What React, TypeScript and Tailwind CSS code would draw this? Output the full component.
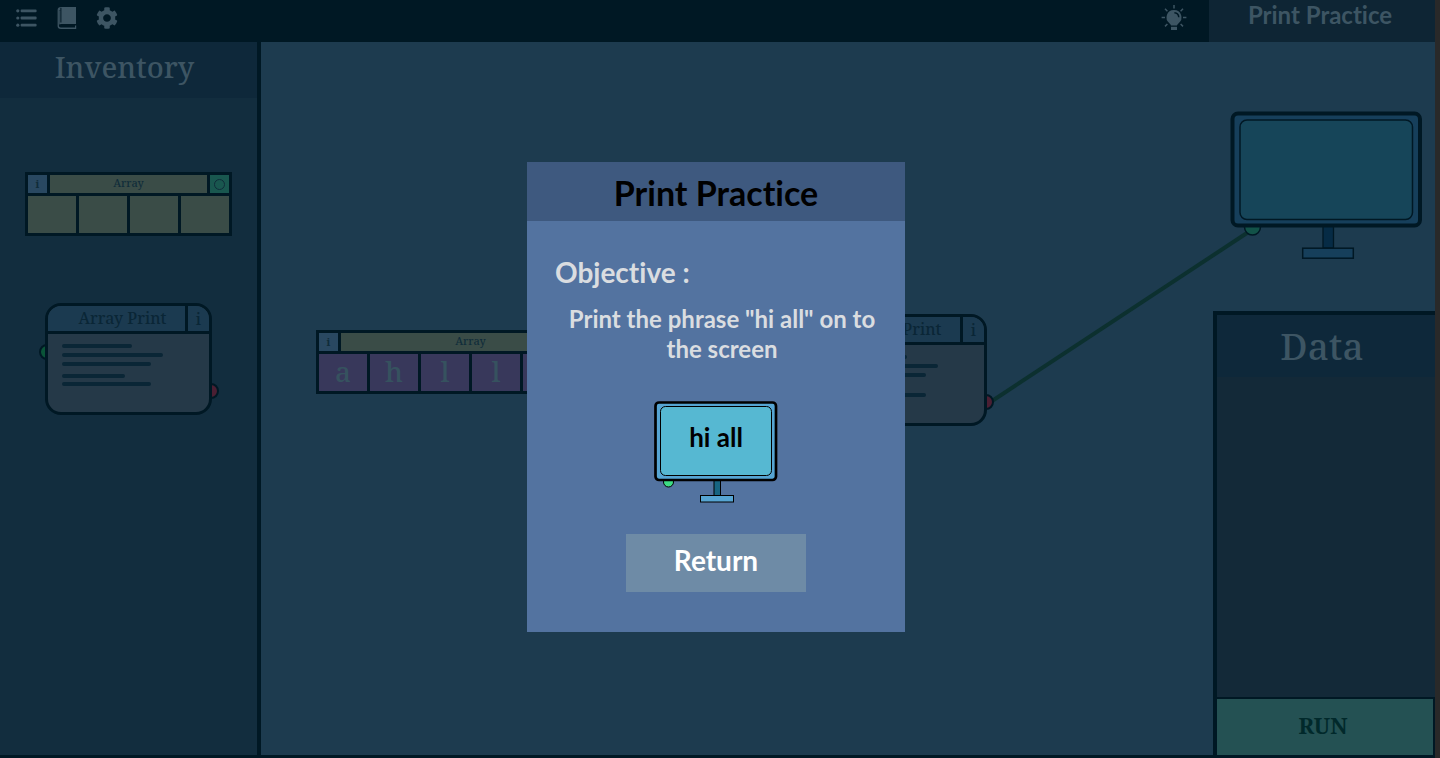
import React from "react";

const serif = "font-['Noto_Serif','DejaVu_Serif_Condensed','DejaVu_Serif',serif]";
const hand = "font-['Lato',sans-serif] [font-variant-ligatures:none]";

function ListIcon() {
  return (
    <svg viewBox="0 0 22 18" className="h-[18px] w-[22px]" fill="currentColor" aria-hidden="true">
      <circle cx="1.800" cy="1.800" r="1.600" />
      <circle cx="1.800" cy="9" r="1.600" />
      <circle cx="1.800" cy="16.200" r="1.600" />
      <rect x="4.600" y="0.400" width="16" height="2.800" rx="1" />
      <rect x="4.600" y="7.600" width="16" height="2.800" rx="1" />
      <rect x="4.600" y="14.800" width="16" height="2.800" rx="1" />
    </svg>
  );
}

function BookIcon() {
  return (
    <svg viewBox="0 0 20 22" className="h-[22px] w-5" fill="currentColor" aria-hidden="true">
      <path d="M4 0H19V17H4.200C3.400 17 2.600 17.200 2.200 17.600V3.200H3.400V15.600H4.400V0.800H3.400V3H1.900V18.600C1.900 20 2.600 20.400 3.800 20.400H18V18.400H19.200V22H4C1.600 22 0.600 21 0.600 19V3C0.600 1 1.800 0 4 0Z" />
    </svg>
  );
}

function GearIcon() {
  return (
    <svg viewBox="0 0 512 512" className="h-[22px] w-[22px]" fill="currentColor" aria-hidden="true">
      <path d="M487.400 315.700l-42.600-24.600c4.300-23.200 4.300-47 0-70.200l42.600-24.600c4.900-2.800 7.100-8.600 5.500-14-11.100-35.600-30-67.800-54.700-94.600-3.800-4.100-10-5.100-14.800-2.300L380.800 110c-17.900-15.400-38.500-27.300-60.800-35.100V25.800c0-5.600-3.900-10.500-9.400-11.700-36.700-8.200-74.300-7.800-109.200 0-5.500 1.200-9.400 6.100-9.400 11.700V75c-22.200 7.900-42.800 19.800-60.800 35.100L88.700 85.500c-4.900-2.800-11-1.900-14.800 2.300-24.700 26.700-43.600 58.900-54.700 94.600-1.700 5.400.6 11.200 5.500 14L67.300 221c-4.300 23.200-4.300 47 0 70.200l-42.600 24.600c-4.900 2.800-7.100 8.600-5.500 14 11.100 35.600 30 67.800 54.700 94.600 3.800 4.100 10 5.100 14.800 2.300l42.600-24.600c17.900 15.400 38.500 27.300 60.800 35.100v49.200c0 5.600 3.900 10.500 9.400 11.700 36.700 8.200 74.300 7.800 109.200 0 5.500-1.200 9.400-6.100 9.400-11.700v-49.200c22.200-7.900 42.800-19.800 60.800-35.100l42.600 24.600c4.900 2.800 11 1.900 14.800-2.300 24.700-26.700 43.600-58.900 54.700-94.600 1.500-5.500-.7-11.300-5.600-14.100zM256 346c-49.600 0-90-40.400-90-90s40.400-90 90-90 90 40.400 90 90-40.400 90-90 90z" />
    </svg>
  );
}

function BulbIcon() {
  return (
    <svg viewBox="0 0 26 26" className="h-[26px] w-[26px]" aria-hidden="true">
      <g fill="currentColor">
        <path d="M13 5a7.400 7.400 0 0 0-4.400 13.400c.8.600 1.200 1.200 1.400 2.200h6c.2-1 .6-1.600 1.400-2.200A7.400 7.400 0 0 0 13 5z" />
        <rect x="10" y="21.800" width="6" height="3.200" />
      </g>
      <path d="M13.400 7.800a4.800 4.800 0 0 1 4.400 4.400" fill="none" stroke="#001824" strokeWidth="1.500" />
      <path
        d="M13 0v3.400M0.600 12.600H4M22 12.600h3.400M4 3.800l2.400 2.400M22 3.800l-2.400 2.400M4 21.400l2.400-2.400M22 21.400l-2.400-2.400"
        fill="none"
        stroke="currentColor"
        strokeWidth="1.500"
      />
    </svg>
  );
}

type ArrayBlockProps = { cells: string[]; filled?: boolean };

function ArrayBlock({ cells, filled }: ArrayBlockProps) {
  return (
    <div className={`inline-flex flex-col gap-[3px] bg-[#001824] p-[3px] font-medium text-[#102c3a] ${serif}`}>
      <div className="flex h-[18px] gap-[3px] text-[11px] leading-[16px]">
        <button type="button" aria-label="Array info" className="w-[19px] bg-[#294861] font-bold">
          i
        </button>
        <div className="flex-1 bg-[#3a4c47] text-center">Array</div>
        <div className="flex w-[19px] items-center justify-center bg-[#19574f]">
          <span className="size-[11px] rounded-full border border-[#102c3a]" />
        </div>
      </div>
      <div className="flex gap-[3px]">
        {cells.map((c, i) => (
          <div
            key={i}
            className={`h-[37px] w-12 text-center text-[28px] leading-[34px] text-[#36525f] ${
              filled ? "bg-[#38385b]" : "bg-[#3a4c47]"
            }`}
          >
            {c}
          </div>
        ))}
      </div>
    </div>
  );
}

function PrintBlock() {
  return (
    <div className="relative w-[167px]">
      <span className="absolute top-[41px] -left-[6px] size-4 rounded-full border-2 border-[#001824] bg-[#0a5438]" />
      <span className="absolute top-[80px] -right-[7px] size-4 rounded-full border-2 border-[#001824] bg-[#4b1f33]" />
      <div className="relative overflow-hidden rounded-2xl border-3 border-[#001824] bg-[#253948]">
        <div className={`flex h-[28px] border-b-3 border-[#001824] bg-[#1b3a50] font-medium text-[#0a2636] ${serif}`}>
          <div className="flex-1 pl-3 text-center text-[16px] leading-[24px]">Array Print</div>
          <button
            type="button"
            aria-label="Array Print info"
            className="w-6 border-l-3 border-[#001824] text-[16px] leading-[24px]"
          >
            i
          </button>
        </div>
        <svg viewBox="0 0 161 78" className="block h-[78px] w-[161px]" aria-hidden="true">
          <path
            d="M16 12h66M16 21h97M16 30h85M16 42h59M16 50h85"
            stroke="#0a2636"
            strokeWidth="4"
            strokeLinecap="round"
          />
        </svg>
      </div>
    </div>
  );
}

function Display() {
  return (
    <svg viewBox="0 0 192 148" className="block h-[148px] w-[192px]" stroke="#001824" aria-hidden="true">
      <circle cx="22.500" cy="116" r="8" fill="#125248" strokeWidth="1.500" />
      <rect x="93" y="112" width="10.500" height="25" fill="#062b45" strokeWidth="1.300" />
      <rect x="72.700" y="137.200" width="50.600" height="10" fill="#163f5b" strokeWidth="1.500" />
      <rect x="2.500" y="2.500" width="187.500" height="112" rx="5.500" fill="#163f5b" strokeWidth="4" />
      <rect x="10" y="9" width="172.500" height="99.500" rx="7" fill="#164559" strokeWidth="1.500" />
    </svg>
  );
}

function MiniDisplay() {
  return (
    <svg viewBox="0 0 124 102" className="block h-[102px] w-[124px]" stroke="#000" role="img" aria-label="Screen showing hi all">
      <circle cx="14.500" cy="81" r="5" fill="#3ddc84" />
      <rect x="60" y="77" width="6.500" height="19" fill="#176582" />
      <rect x="46.500" y="94.500" width="33" height="6.500" fill="#56a5d3" />
      <rect x="1.500" y="1.500" width="120.500" height="77.500" rx="3.500" fill="#56a5d3" strokeWidth="2.700" />
      <rect x="6.500" y="5.500" width="111" height="69" rx="5" fill="#56b8d2" />
      <text x="62" y="46" textAnchor="middle" fill="#000" stroke="none" className="text-[26px] font-bold font-['Lato',sans-serif]">
        hi all
      </text>
    </svg>
  );
}

export default function App() {
  return (
    <div className="flex h-screen min-h-[640px] flex-col overflow-hidden border-r-[5px] border-[#292929] bg-[#001824] pb-[3px]">
      <header className="flex h-[42px] shrink-0 items-stretch justify-between text-[#3d5563]">
        <nav className="flex items-center gap-[19px] pb-[7px] pl-4">
          <button type="button" aria-label="Menu"><ListIcon /></button>
          <button type="button" aria-label="Guide"><BookIcon /></button>
          <button type="button" aria-label="Settings"><GearIcon /></button>
        </nav>
        <div className="flex items-stretch gap-[22px]">
          <button type="button" aria-label="Hint" className="pb-[7px]"><BulbIcon /></button>
          <h1 className={`w-[226px] bg-[#0e2534] pr-1 text-center text-[24px] leading-[30px] font-bold ${hand}`}>
            Print Practice
          </h1>
        </div>
      </header>

      <div className="flex min-h-0 flex-1">
        <aside className="flex w-[261px] shrink-0 flex-col border-r-4 border-[#001824] bg-[#122d3e]">
          <h2 className={`h-14 bg-[#0e283a] pr-2 text-center text-[29px] leading-[50px] font-medium text-[#3d5563] ${serif}`}>
            Inventory
          </h2>
          <div className="flex flex-col items-center gap-[67px] pt-[74px]">
            <div className="flex"><ArrayBlock cells={["", "", "", ""]} /></div>
            <PrintBlock />
          </div>
        </aside>

        <main className="relative flex flex-1 justify-end bg-[#1d3b4f]">
          <svg className="absolute inset-0 h-full w-full" aria-hidden="true">
            <line x1="728" y1="361" x2="989" y2="189" stroke="#0c302f" strokeWidth="4" />
          </svg>
          <div className="absolute top-[288px] left-[55px] flex">
            <ArrayBlock cells={["a", "h", "l", "l", "i", ""]} filled />
          </div>
          <div className="absolute top-[272px] left-[559px]">
            <PrintBlock />
          </div>
          <div className="relative flex w-[222px] flex-col pt-[69px]">
            <div className="mb-[52px] pl-[17px]"><Display /></div>
            <section className="flex flex-1 flex-col border-t-4 border-l-4 border-[#001824] bg-[#132938]">
              <h2 className={`h-[62px] bg-[#0e283a] pr-2 text-center text-[37px] leading-[62px] font-medium text-[#3d5563] ${serif}`}>
                Data
              </h2>
              <div className="flex-1" />
              <button
                type="button"
                className={`h-[58px] border-t-2 border-r-2 border-[#001824] bg-[#245153] pr-1 pb-1 text-[22px] font-bold text-[#01292b] ${serif}`}
              >
                RUN
              </button>
            </section>
          </div>
        </main>
      </div>

      <div className="fixed inset-0 flex items-start justify-center pt-[162px] pr-2">
        <div
          role="dialog"
          aria-labelledby="level-title"
          className={`flex w-[378px] flex-col items-center bg-[#5373a0] pb-10 font-bold ${hand}`}
        >
          <h2 id="level-title" className="h-[59px] w-full bg-[#3e597f] text-center text-[34px] leading-[62px] text-black">
            Print Practice
          </h2>
          <div className="w-full pt-[31px] text-[#dadde0]">
            <h3 className="pl-7 text-[28px] leading-10">Objective :</h3>
            <p className="mt-3 pr-6 pl-9 text-center text-[24px] leading-[30px]">
              Print the phrase "hi all" on to the screen
            </p>
          </div>
          <div className="pt-[37px]"><MiniDisplay /></div>
          <button type="button" className="mt-[31px] h-[58px] w-[180px] bg-[#6e8ba6] pb-[6px] text-[28px] text-white">
            Return
          </button>
        </div>
      </div>
    </div>
  );
}
